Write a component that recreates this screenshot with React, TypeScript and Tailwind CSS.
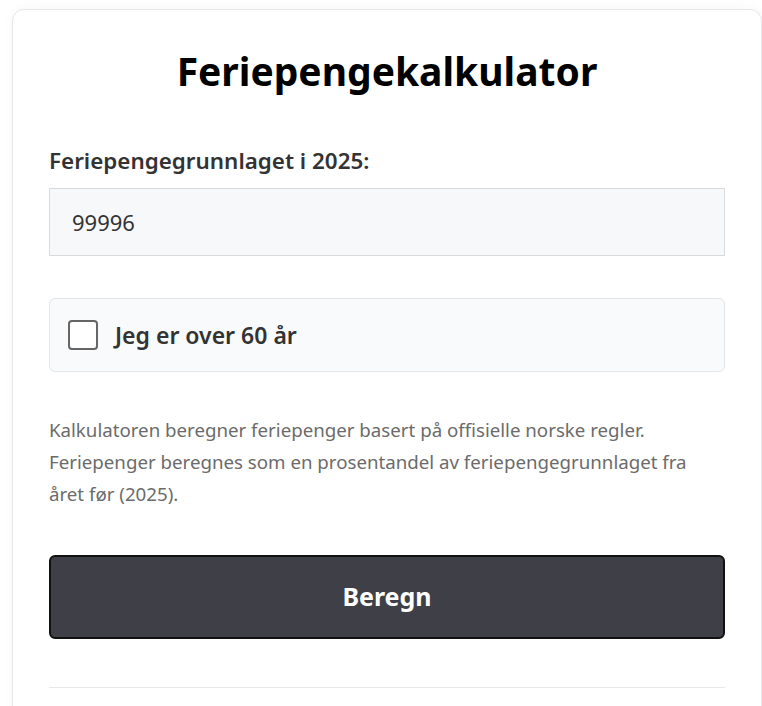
import React, { useState } from 'react'

export default function App() {
  const [amount, setAmount] = useState('99996')
  const [over60, setOver60] = useState(false)

  return (
    <div className="min-h-screen bg-white pt-[9px] pl-3" style={{ fontFamily: '"Noto Sans", "Open Sans", sans-serif' }}>
      <div className="rounded-xl border border-gray-200 bg-white px-9 pt-[35px] pb-5 shadow-[0_0_12px_rgba(0,0,0,0.04)]">
        <h1 className="text-center text-[39px] font-bold leading-[52px] text-black">Feriepengekalkulator</h1>

        <label htmlFor="grunnlag" className="mt-[50px] block text-[22.4px] font-semibold leading-7 text-[#333]">
          Feriepengegrunnlaget i 2025:
        </label>
        <input
          id="grunnlag"
          value={amount}
          onChange={(e) => setAmount(e.target.value)}
          className="mt-[13px] block h-[68px] w-full border border-[#d9dadc] bg-[#f7f8fa] px-[22px] text-[22px] text-[#333] outline-none"
        />

        <label className="mt-[42px] flex h-[74px] cursor-pointer items-center gap-[17px] rounded-md border border-[#e4e5e7] bg-[#f9fafb] px-[18px]">
          <input
            type="checkbox"
            checked={over60}
            onChange={(e) => setOver60(e.target.checked)}
            className="h-[30px] w-[30px] shrink-0 appearance-none rounded-[4px] border-2 border-[#666] bg-white"
          />
          <span className="text-[23px] font-semibold text-[#333]">Jeg er over 60 år</span>
        </label>

        <p className="mt-[42px] text-[18.7px] leading-8 text-[#6b6b6b]">
          Kalkulatoren beregner feriepenger basert på offisielle norske regler. Feriepenger beregnes som en prosentandel av feriepengegrunnlaget fra året før (2025).
        </p>

        <button className="mt-[45px] flex h-[84px] w-full items-center justify-center rounded-md border-2 border-[#111] bg-[#3f3f48] text-[25px] font-bold text-white">
          Beregn
        </button>

        <div className="mt-12 border-t border-[#e8e8ea]" />
        <div className="h-4" />
      </div>
    </div>
  )
}
